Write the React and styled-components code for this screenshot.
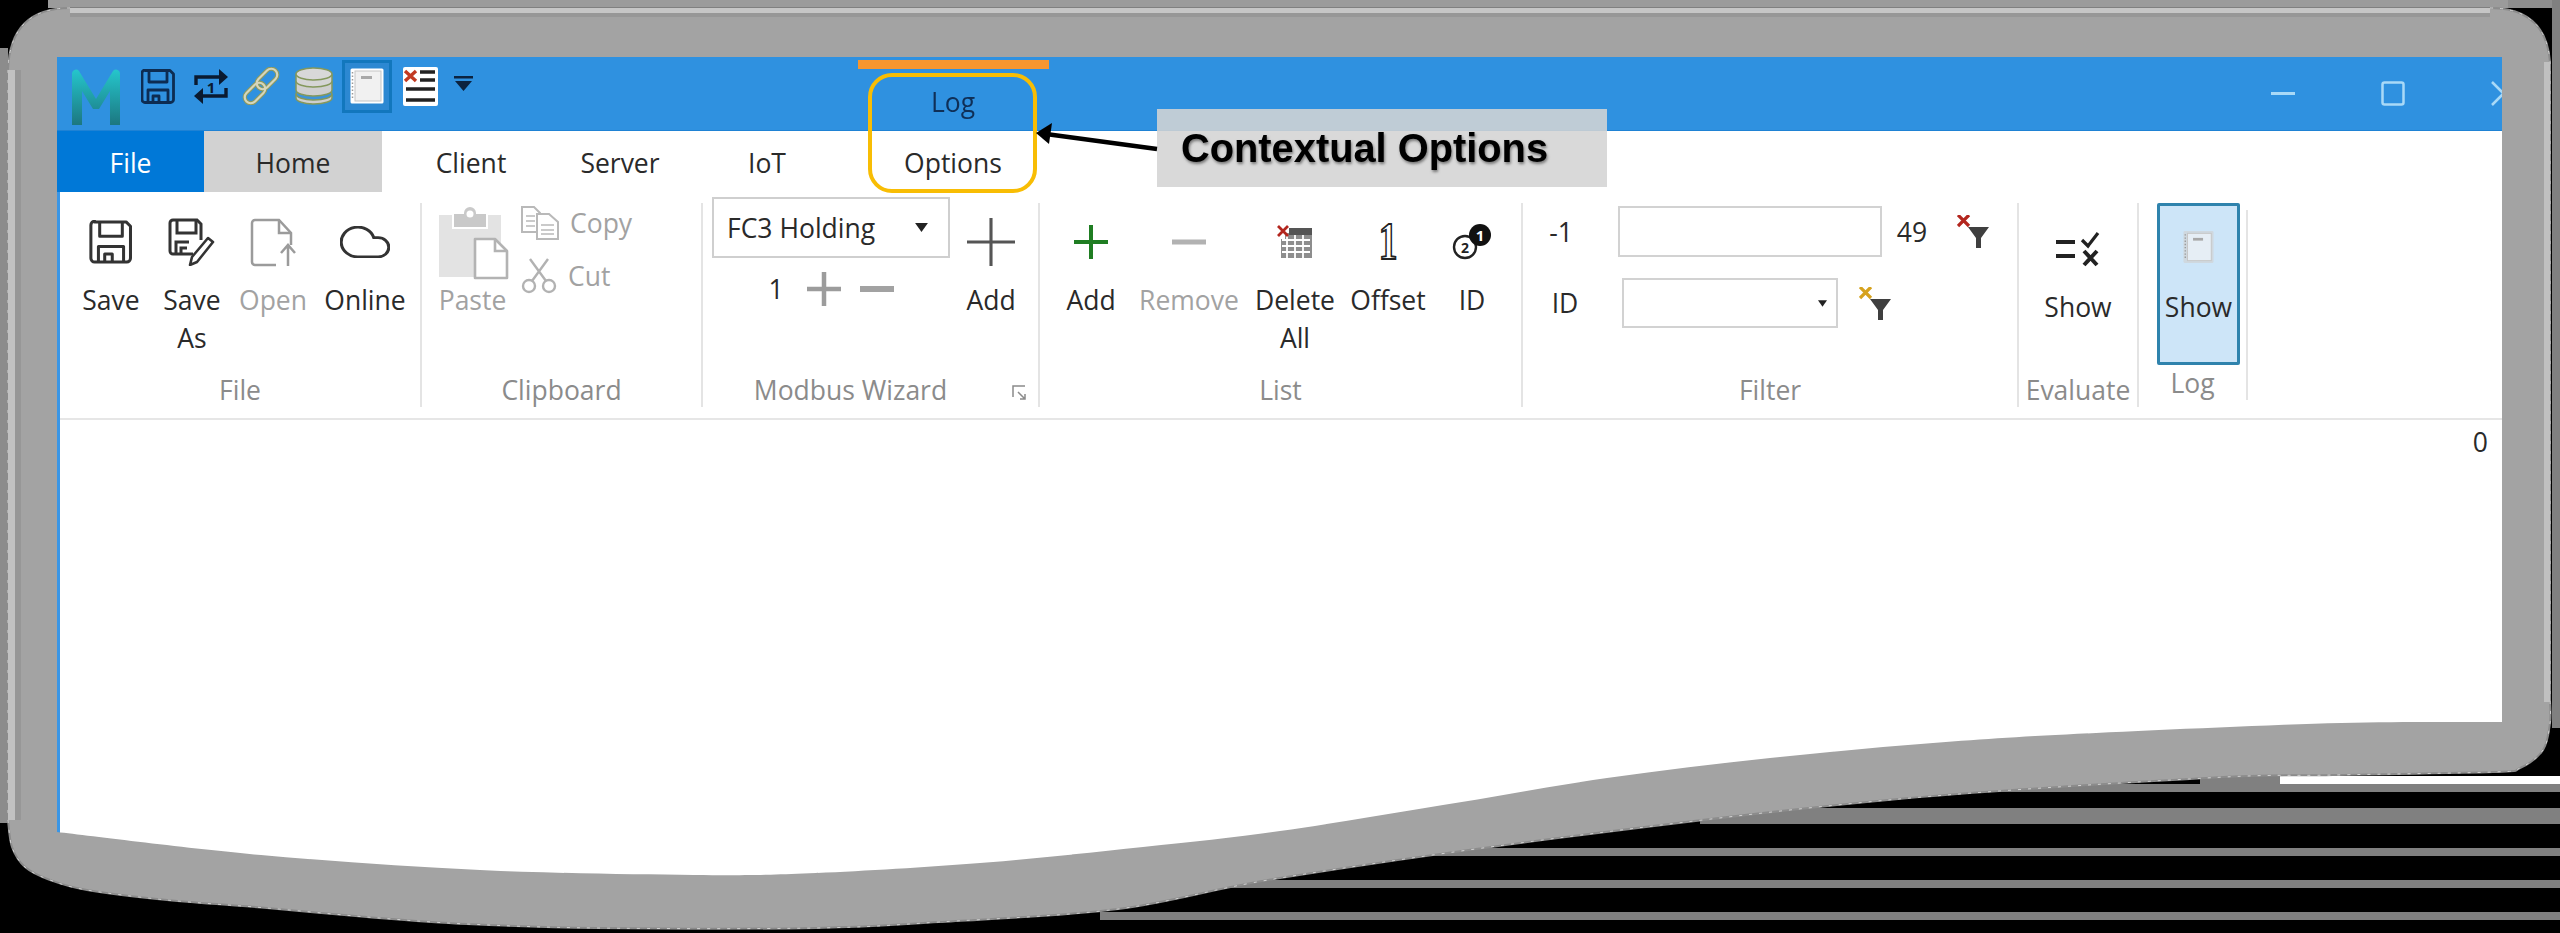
import React from "react";
import styled, { createGlobalStyle } from "styled-components";

const smooth = (pts) => {
  let d = "";
  for (let i = 0; i < pts.length - 1; i++) {
    const p0 = pts[i - 1] || pts[i];
    const p1 = pts[i];
    const p2 = pts[i + 1];
    const p3 = pts[i + 2] || p2;
    const c1 = [p1[0] + (p2[0] - p0[0]) / 6, p1[1] + (p2[1] - p0[1]) / 6];
    const c2 = [p2[0] - (p3[0] - p1[0]) / 6, p2[1] - (p3[1] - p1[1]) / 6];
    d += `C${c1[0].toFixed(1)} ${c1[1].toFixed(1)} ${c2[0].toFixed(1)} ${c2[1].toFixed(1)} ${p2[0]} ${p2[1]}`;
  }
  return d;
};

const WIN_X = 57;
const WIN_Y = 57;
const wavePts = [
  [2502, 722], [2341, 723], [2096, 733], [1933, 743], [1770, 758], [1607, 778], [1443, 805],
  [1280, 831], [1143, 847], [980, 863], [816, 873], [694, 875], [480, 870], [261, 855], [57, 832],
].map(([x, y]) => [x - WIN_X, y - WIN_Y]);
const WAVE_CLIP = `M0 0H2445V${wavePts[0][1]}${smooth(wavePts)}Z`;

const shapePts = [
  [2550, 700], [2550, 723], [2543, 750], [2520, 768], [2493, 772], [2333, 775], [2206, 778], [1888, 800],
  [1558, 838], [1280, 878], [1118, 909], [939, 922], [816, 928], [596, 928], [467, 924], [367, 917],
  [267, 908], [167, 900], [87, 890], [50, 880], [25, 867], [12, 847], [8, 820],
];
const SHAPE = `M70 8H2490Q2546 8 2550 62V700${smooth(shapePts)}V70Q10 8 70 8Z`;

const GlobalStyle = createGlobalStyle`
  html, body { margin: 0; padding: 0; background: #000; overflow: hidden; }
  * { box-sizing: border-box; }
`;

const Page = styled.div`
  position: relative;
  width: 2560px;
  height: 933px;
  padding: ${WIN_Y}px 0 0 ${WIN_X}px;
  font-family: "Open Sans", "Noto Sans", sans-serif;
  font-size: 26.5px;
  line-height: 38px;
  color: #2a2a2a;
  overflow: hidden;
`;
const Backdrop = styled.svg`
  position: absolute;
  inset: 0;
`;
const AppWindow = styled.div`
  position: relative;
  width: 2445px;
  height: 819px;
  display: flex;
  flex-direction: column;
  background: #fff;
  clip-path: path("${WAVE_CLIP}");
  filter: blur(0.6px);
`;
const TitleBar = styled.div`
  display: grid;
  grid-template-columns: 797px 198px 1fr;
  height: 74px;
  flex: none;
  background: #2f91e0;
  border-bottom: 1px solid #1f82d4;
`;
const QuickBar = styled.div`
  display: flex;
  align-items: center;
  height: 40px;
  margin-top: 9px;
  padding-left: 15px;
`;
const Slot = styled.div`
  display: flex;
  flex: none;
  margin-left: ${(p) => p.$gap || 0}px;
  margin-top: ${(p) => p.$top || 0}px;
`;
const ActiveSlot = styled(Slot)`
  align-items: center;
  justify-content: center;
  width: 50px;
  height: 53px;
  border: 3px solid #1277bd;
  background: #2c88d2;
`;
const ContextTitle = styled.div`
  margin-top: 26px;
  text-align: center;
  color: #0f2f57;
`;
const WindowControls = styled.div`
  display: flex;
  align-items: center;
  justify-content: flex-end;
  gap: 86px;
  margin-right: -14px;
  overflow: visible;
`;
const TabRow = styled.div`
  display: flex;
  height: 61px;
  flex: none;
  background: #fff;
`;
const Tab = styled.div`
  width: ${(p) => p.$w}px;
  padding-top: 13px;
  text-align: center;
  line-height: 38px;
  color: ${(p) => (p.$file ? "#fff" : "#2a2a2a")};
  background: ${(p) => (p.$file ? "#0078d7" : p.$active ? "#d2d2d2" : "#fff")};
`;
const Body = styled.div`
  flex: 1;
  display: flex;
  flex-direction: column;
  border-left: 3px solid #3a96e6;
`;
const Ribbon = styled.div`
  display: flex;
  height: 228px;
  flex: none;
  padding-top: 11px;
  border-bottom: 2px solid #e6e6e6;
`;
const Group = styled.div`
  position: relative;
  display: flex;
  flex-direction: column;
  width: ${(p) => p.$w}px;
  height: ${(p) => p.$h || 204}px;
  margin-top: ${(p) => p.$top || 0}px;
  border-right: 2px solid #e4e4e4;
`;
const GroupBody = styled.div`
  flex: 1;
  display: flex;
  min-height: 0;
  padding-left: ${(p) => p.$pad || 0}px;
`;
const GroupLabel = styled.div`
  flex: none;
  height: 36px;
  padding-right: ${(p) => p.$right || 0}px;
  text-align: center;
  line-height: 38px;
  color: #8b8b8b;
`;
const Launcher = styled.svg`
  position: absolute;
  right: 12px;
  bottom: 6px;
`;
const RibbonButton = styled.div`
  flex: none;
  display: flex;
  flex-direction: column;
  align-items: center;
  width: ${(p) => p.$w}px;
  text-align: center;
  white-space: nowrap;
  color: ${(p) => (p.$off ? "#a2a2a2" : "#2a2a2a")};
`;
const IconArea = styled.div`
  display: flex;
  align-items: center;
  justify-content: center;
  height: ${(p) => p.$h || 78}px;
  padding-top: ${(p) => p.$pt || 0}px;
`;
const SmallColumn = styled.div`
  display: flex;
  flex-direction: column;
  gap: 15px;
  margin-left: -2px;
  padding-top: 1px;
`;
const SmallRow = styled.div`
  display: flex;
  align-items: center;
  gap: 11px;
  height: 38px;
  color: #a2a2a2;
`;
const WizardColumn = styled.div`
  display: flex;
  flex-direction: column;
  width: 238px;
`;
const Combo = styled.div`
  display: flex;
  align-items: center;
  justify-content: space-between;
  width: 238px;
  height: 61px;
  margin-top: -6px;
  padding: 0 20px 0 13px;
  border: 2px solid #cfcfcf;
  background: #fff;
`;
const Stepper = styled.div`
  display: flex;
  align-items: center;
  height: 40px;
  margin-top: 11px;
  padding-left: 56px;
`;
const StepValue = styled.span`
  width: 16px;
  text-align: center;
`;
const StepGlyph = styled.svg`
  margin-left: ${(p) => p.$gap}px;
`;
const AddColumn = styled(RibbonButton)`
  margin-left: 6px;
`;
const FilterBody = styled.div`
  display: flex;
  flex-direction: column;
  gap: 21px;
  padding-top: 3px;
`;
const FilterRow = styled.div`
  display: flex;
  align-items: center;
  height: ${(p) => p.$h}px;
`;
const FilterText = styled.span`
  flex: none;
  width: ${(p) => p.$w}px;
  margin-right: ${(p) => p.$mr || 0}px;
  text-align: center;
`;
const Field = styled.div`
  flex: none;
  display: flex;
  align-items: center;
  justify-content: flex-end;
  width: ${(p) => p.$w}px;
  height: 100%;
  padding-right: 9px;
  border: 2px solid #d2d2d2;
  background: #fff;
`;
const FunnelSlot = styled.div`
  display: flex;
  margin-left: ${(p) => p.$gap}px;
`;
const PressedButton = styled(RibbonButton)`
  height: 162px;
  margin: -7px 0 0 18px;
  border: 3px solid #2f83ad;
  border-radius: 2px;
  background: #cde5f8;
`;
const Content = styled.div`
  flex: 1;
  padding: 3px 14px 0 0;
  text-align: right;
`;
const OrangeBar = styled.div`
  position: absolute;
  left: 858px;
  top: 60px;
  width: 191px;
  height: 9px;
  background: #f7962f;
`;
const YellowFrame = styled.div`
  position: absolute;
  left: 868px;
  top: 73px;
  width: 169px;
  height: 120px;
  border: 4px solid #f8bd04;
  border-radius: 24px;
`;
const CalloutBox = styled.div`
  position: absolute;
  left: 1157px;
  top: 109px;
  width: 450px;
  height: 78px;
  display: flex;
  align-items: center;
  padding-left: 24px;
  background: rgba(212, 212, 212, 0.88);
  font-family: "Liberation Sans", Arial, sans-serif;
  font-weight: 700;
  font-size: 39.8px;
  color: #000;
  text-shadow: 1px 2px 3px #777;
  white-space: nowrap;
`;
const CalloutArrow = styled.svg`
  position: absolute;
  left: 1030px;
  top: 118px;
`;

const FloppyPaths = ({ color, sw }) => (
  <g fill="none" stroke={color} strokeWidth={sw} strokeLinejoin="round">
    <path d="M4 1.500h25l3.500 3.500v25.500a3 3 0 0 1-3 3h-25.500a3 3 0 0 1-3-3v-26.500a3 3 0 0 1 3-3z" />
    <path d="M8 2v11h18V2" />
    <path d="M7 33V21h20v12" />
    <path d="M12 33v-6h6v6" />
  </g>
);
const Floppy = ({ w, h, color = "#333", sw = 2.4 }) => (
  <svg width={w} height={h} viewBox="0 0 34 35"><FloppyPaths color={color} sw={sw} /></svg>
);
const SaveAsIcon = () => (
  <svg width="48" height="48" viewBox="0 0 48 48" fill="none">
    <path d="M25 36H5a3 3 0 0 1-3-3V5a3 3 0 0 1 3-3h24l4 4v16" stroke="#333" strokeWidth="3" />
    <path d="M9 3v12h19V3M8 36V24h13M13 36v-6h6" stroke="#333" strokeWidth="3" />
    <path d="M40 20l5 4-16 20-7 3 2-8z" stroke="#333" strokeWidth="2.600" strokeLinejoin="round" />
  </svg>
);
const OpenIcon = () => (
  <svg width="46" height="49" viewBox="0 0 46 49" fill="none" stroke="#9b9b9b" strokeWidth="2.500">
    <path d="M26 47H5a3 3 0 0 1-3-3V5a3 3 0 0 1 3-3h24l12 13v12" />
    <path d="M29 2v13h12" />
    <path d="M38 48V28M31 35l7-8 7 8" />
  </svg>
);
const CloudIcon = () => (
  <svg width="50" height="32" viewBox="1.500 4.500 21 15" preserveAspectRatio="none" fill="none" stroke="#333" strokeWidth="1.300">
    <path d="M17.500 19H9a7 7 0 1 1 6.710-9h1.790a4.500 4.500 0 1 1 0 9Z" />
  </svg>
);
const PasteIcon = () => (
  <svg width="72" height="75" viewBox="0 0 72 75">
    <path d="M2 10h62v62H2z" fill="#e3e3e3" />
    <path d="M16 8h10a7 7 0 0 1 14 0h10v15H16z" fill="#c9c9c9" stroke="#fff" strokeWidth="2" />
    <circle cx="33" cy="9" r="3.500" fill="#fff" />
    <path d="M38 34h20l12 12v27H38z" fill="#fff" stroke="#b3b3b3" strokeWidth="2.600" strokeLinejoin="round" />
    <path d="M58 34v12h12" fill="none" stroke="#b3b3b3" strokeWidth="2.600" />
  </svg>
);
const CopyIcon = () => (
  <svg width="38" height="34" viewBox="0 0 38 34" fill="#fff" stroke="#b9b9b9" strokeWidth="2">
    <path d="M1 1h12l6 6v19H1z" />
    <path d="M16 8h12l9 8v17H16z" />
    <path d="M5 10h9M5 15h9M5 20h9M20 19h13M20 24h13M20 28h13" strokeWidth="1.500" />
  </svg>
);
const CutIcon = () => (
  <svg width="36" height="36" viewBox="0 0 36 36" fill="none" stroke="#b2b2b2" strokeWidth="2.400">
    <circle cx="8" cy="28" r="6" />
    <circle cx="28" cy="28" r="6" />
    <path d="M11 23L27 1M25 23L9 1" />
  </svg>
);
const PlusGlyph = ({ size, color, sw, gap }) => (
  <StepGlyph $gap={gap || 0} width={size} height={size} viewBox="0 0 34 34" stroke={color} strokeWidth={sw} fill="none">
    <path d="M0 17H34M17 0V34" />
  </StepGlyph>
);
const MinusGlyph = ({ color, sw, gap }) => (
  <StepGlyph $gap={gap || 0} width="34" height="34" viewBox="0 0 34 34" stroke={color} strokeWidth={sw} fill="none">
    <path d="M0 17H34" />
  </StepGlyph>
);
const DeleteAllIcon = () => (
  <svg width="36" height="34" viewBox="0 0 36 34">
    <path d="M8 8h27v25H4V14h4z" fill="#8d8d8d" />
    <path d="M12 3h23v7H12z" fill="#555" />
    <path d="M5 15h28M5 21h28M5 27h28M10 10v23M18 10v23M26 10v23" stroke="#fff" strokeWidth="1.800" />
    <path d="M1 1l10 10M11 1L1 11" stroke="#b3261e" strokeWidth="2.800" />
  </svg>
);
const OffsetGlyph = styled.span`
  display: block;
  font-family: "Liberation Serif", serif;
  font-weight: 700;
  font-size: 52px;
  line-height: 40px;
  color: #fff;
  -webkit-text-stroke: 2px #222;
  transform: scaleX(0.72);
`;
const IdIcon = () => (
  <svg width="40" height="36" viewBox="0 0 40 36">
    <circle cx="13" cy="23" r="11" fill="#fff" stroke="#222" strokeWidth="2.400" />
    <text x="13" y="28.500" textAnchor="middle" fontFamily="Open Sans" fontWeight="700" fontSize="14" fill="#222">2</text>
    <circle cx="28" cy="11" r="11" fill="#111" />
    <text x="28" y="17" textAnchor="middle" fontFamily="Open Sans" fontWeight="700" fontSize="15" fill="#fff">1</text>
  </svg>
);
const FunnelIcon = ({ color }) => (
  <svg width="33" height="33" viewBox="0 0 33 33">
    <path d="M1 0l11 11M12 0L1 11" stroke={color} strokeWidth="3.200" fill="none" />
    <path d="M11 12h21L24 23v10h-5V23z" fill="#3f3f3f" />
  </svg>
);
const EvaluateIcon = () => (
  <svg width="44" height="35" viewBox="0 0 44 35" fill="none" stroke="#222" strokeWidth="4">
    <path d="M0 10h19M0 24h19" />
    <path d="M26 8l6 6 10-13" strokeWidth="3.200" />
    <path d="M28 19l13 14M41 19L28 33" />
  </svg>
);
const NotebookIcon = ({ w, h, page = "#f1f1f1", edge = "#fff", bar = "#a8a8a8" }) => (
  <svg width={w} height={h} viewBox="0 0 34 36">
    <rect x="0.500" y="0.500" width="33" height="35" rx="1.500" fill={edge} />
    <rect x="5" y="3" width="26" height="30" fill={page} stroke="#c5c5c5" strokeWidth="1" />
    <path d="M2.500 4v28" stroke="#9a9a9a" strokeWidth="1.500" strokeDasharray="1.500 2" />
    <rect x="11" y="8" width="11" height="3" fill={bar} />
  </svg>
);
const RepeatIcon = () => (
  <svg width="36" height="37" viewBox="0 0 36 37" fill="none" stroke="#0a1a30" strokeWidth="3.400">
    <path d="M3 17V9h25" />
    <path d="M26 1l9 8-9 8z" fill="#0a1a30" stroke="none" />
    <path d="M33 20v8H8" />
    <path d="M10 20l-9 8 9 8z" fill="#0a1a30" stroke="none" />
    <text x="18" y="25" textAnchor="middle" fontFamily="Open Sans" fontWeight="700" fontSize="15" fill="#0a1a30" stroke="none">1</text>
  </svg>
);
const ChainLinks = () => (
  <>
    <rect x="1" y="20" width="24" height="12" rx="6" transform="rotate(-45 13 26)" />
    <rect x="13" y="6" width="24" height="12" rx="6" transform="rotate(-45 25 12)" />
  </>
);
const LinkIcon = () => (
  <svg width="38" height="38" viewBox="0 0 38 38" fill="none">
    <g stroke="#8b9a62" strokeWidth="4.400"><ChainLinks /></g>
    <g stroke="#d6d6bc" strokeWidth="2.200"><ChainLinks /></g>
  </svg>
);
const DatabaseIcon = () => (
  <svg width="38" height="38" viewBox="0 0 38 38" stroke="#84985c" strokeWidth="1.500">
    <path d="M1 28v3c0 3.500 8 6 18 6s18-2.500 18-6v-3z" fill="#cfcfcf" />
    <ellipse cx="19" cy="27" rx="18" ry="6" fill="#3d93d8" />
    <path d="M1 15v8c0 3.500 8 6 18 6s18-2.500 18-6v-8z" fill="#cfcfcf" />
    <path d="M1 8v6c0 3.500 8 6 18 6s18-2.500 18-6V8z" fill="#d5d5d5" />
    <ellipse cx="19" cy="7" rx="18" ry="6" fill="#d8d8d8" />
  </svg>
);
const ListXIcon = () => (
  <svg width="35" height="39" viewBox="0 0 35 39">
    <rect width="35" height="39" rx="2" fill="#fff" />
    <path d="M2 4l11 10M13 4L2 14" stroke="#c23a22" strokeWidth="3.400" />
    <path d="M17 5h15M17 13h15M3 22h29M3 33h29" stroke="#222" strokeWidth="3.600" />
  </svg>
);
const DropGlyph = () => (
  <svg width="19" height="15" viewBox="0 0 19 15">
    <path d="M0 0h19v2.500H0zM1 5h17l-8.500 10z" fill="#0c2340" />
  </svg>
);
const LogoM = () => (
  <svg width="48" height="56" viewBox="0 0 48 56" fill="none">
    <defs>
      <linearGradient id="logoGrad" x1="0" y1="0" x2="0" y2="1">
        <stop offset="0" stopColor="#25c6cc" />
        <stop offset="1" stopColor="#1c7780" />
      </linearGradient>
    </defs>
    <path d="M0 56V4a4 4 0 0 1 7-2l17 28L41 2a4 4 0 0 1 7 2v52H38V22L27 40h-6L10 22v34z" fill="url(#logoGrad)" />
  </svg>
);
const Triangle = ({ w, h, color = "#222" }) => (
  <svg width={w} height={h} viewBox="0 0 10 7"><path d="M0 0h10L5 7z" fill={color} /></svg>
);

export default function App() {
  return (
    <Page>
      <GlobalStyle />
      <Backdrop width="2560" height="933" viewBox="0 0 2560 933">
        <rect width="2560" height="933" fill="#000" />
        <rect x="48" y="0" width="2460" height="8" fill="#9b9b9b" />
        <rect x="0" y="48" width="8" height="775" fill="#8c8c8c" />
        <rect x="2552" y="0" width="8" height="728" fill="#808080" />
        <rect x="2508" y="0" width="44" height="8" fill="#8e8e8e" />
        <rect x="2280" y="776" width="280" height="8" fill="#fff" />
        <rect x="2200" y="776" width="80" height="8" fill="#808080" />
        <rect x="1900" y="784" width="660" height="8" fill="#808080" />
        <rect x="1700" y="808" width="860" height="16" fill="#808080" />
        <rect x="1400" y="848" width="1160" height="8" fill="#808080" />
        <rect x="1200" y="880" width="1360" height="8" fill="#808080" />
        <rect x="1100" y="912" width="1460" height="8" fill="#808080" />
        <path d={SHAPE} fill="#a3a3a3" stroke="#8c8c8c" strokeWidth="2" />
        <path d={SHAPE} fill="none" stroke="#d4d4d4" strokeWidth="1" strokeDasharray="3 7" />
        <rect x="70" y="7" width="2420" height="1" fill="#808080" />
        <rect x="70" y="8" width="2420" height="5" fill="#c6c6c6" />
        <rect x="70" y="13" width="2420" height="4" fill="#979797" />
        <rect x="8" y="70" width="7" height="750" fill="#c2c2c2" />
        <rect x="15" y="70" width="6" height="750" fill="#979797" />
        <rect x="2544" y="62" width="6" height="640" fill="#c0c0c0" />
      </Backdrop>

      <AppWindow>
        <TitleBar>
          <QuickBar>
            <Slot $top={22}><LogoM /></Slot>
            <Slot $gap={21}><Floppy w={34} h={35} color="#0d2c52" sw={2.800} /></Slot>
            <Slot $gap={18}><RepeatIcon /></Slot>
            <Slot $gap={13}><LinkIcon /></Slot>
            <Slot $gap={15}><DatabaseIcon /></Slot>
            <ActiveSlot $gap={9}><NotebookIcon w={34} h={36} /></ActiveSlot>
            <Slot $gap={11}><ListXIcon /></Slot>
            <Slot $gap={16} $top={-6}><DropGlyph /></Slot>
          </QuickBar>
          <ContextTitle>Log</ContextTitle>
          <WindowControls>
            <svg width="24" height="4"><rect width="24" height="3" fill="#a9d9f7" /></svg>
            <svg width="24" height="25" fill="none" stroke="#a9d9f7" strokeWidth="2.500">
              <rect x="1.500" y="1.500" width="21" height="22" rx="2" />
            </svg>
            <svg width="25" height="25" fill="none" stroke="#a9d9f7" strokeWidth="2.500">
              <path d="M1 1l23 23M24 1L1 24" />
            </svg>
          </WindowControls>
        </TitleBar>

        <TabRow>
          <Tab $w={147} $file>File</Tab>
          <Tab $w={178} $active>Home</Tab>
          <Tab $w={178}>Client</Tab>
          <Tab $w={120}>Server</Tab>
          <Tab $w={174}>IoT</Tab>
          <Tab $w={198}>Options</Tab>
        </TabRow>

        <Body>
          <Ribbon>
            <Group $w={362}>
              <GroupBody $pad={10}>
                <RibbonButton $w={82}>
                  <IconArea><Floppy w={44} h={44} /></IconArea>Save
                </RibbonButton>
                <RibbonButton $w={80}>
                  <IconArea><SaveAsIcon /></IconArea>Save<br />As
                </RibbonButton>
                <RibbonButton $w={82} $off>
                  <IconArea><OpenIcon /></IconArea>Open
                </RibbonButton>
                <RibbonButton $w={102}>
                  <IconArea><CloudIcon /></IconArea>Online
                </RibbonButton>
              </GroupBody>
              <GroupLabel>File</GroupLabel>
            </Group>

            <Group $w={281}>
              <GroupBody>
                <RibbonButton $w={101} $off>
                  <IconArea><PasteIcon /></IconArea>Paste
                </RibbonButton>
                <SmallColumn>
                  <SmallRow><CopyIcon />Copy</SmallRow>
                  <SmallRow><CutIcon />Cut</SmallRow>
                </SmallColumn>
              </GroupBody>
              <GroupLabel>Clipboard</GroupLabel>
            </Group>

            <Group $w={337}>
              <GroupBody $pad={9}>
                <WizardColumn>
                  <Combo>FC3 Holding<Triangle w={13} h={9} /></Combo>
                  <Stepper>
                    <StepValue>1</StepValue>
                    <PlusGlyph size={34} color="#9c9c9c" sw={4.500} gap={23} />
                    <MinusGlyph color="#a2a2a2" sw={6} gap={19} />
                  </Stepper>
                </WizardColumn>
                <AddColumn $w={70}>
                  <IconArea><PlusGlyph size={48} color="#555" sw={2.200} /></IconArea>Add
                </AddColumn>
              </GroupBody>
              <GroupLabel $right={40}>Modbus Wizard</GroupLabel>
              <Launcher width="14" height="16" viewBox="0 0 14 16" fill="none" stroke="#8b8b8b" strokeWidth="1.500">
                <path d="M1 12V1h12" />
                <path d="M6 7l7 7M13 9v5H8" />
              </Launcher>
            </Group>

            <Group $w={483}>
              <GroupBody $pad={4}>
                <RibbonButton $w={94}>
                  <IconArea><PlusGlyph size={34} color="#1f7d22" sw={4} /></IconArea>Add
                </RibbonButton>
                <RibbonButton $w={102} $off>
                  <IconArea><MinusGlyph color="#b2b2b2" sw={5} /></IconArea>Remove
                </RibbonButton>
                <RibbonButton $w={110}>
                  <IconArea><DeleteAllIcon /></IconArea>Delete<br />All
                </RibbonButton>
                <RibbonButton $w={76}>
                  <IconArea><OffsetGlyph>1</OffsetGlyph></IconArea>Offset
                </RibbonButton>
                <RibbonButton $w={92}>
                  <IconArea><IdIcon /></IconArea>ID
                </RibbonButton>
              </GroupBody>
              <GroupLabel>List</GroupLabel>
            </Group>

            <Group $w={496}>
              <GroupBody>
                <FilterBody>
                  <FilterRow $h={51}>
                    <FilterText $w={76} $mr={19}>-1</FilterText>
                    <Field $w={264} />
                    <FilterText $w={60}>49</FilterText>
                    <FunnelSlot $gap={15}><FunnelIcon color="#b3261e" /></FunnelSlot>
                  </FilterRow>
                  <FilterRow $h={50}>
                    <FilterText $w={84} $mr={15}>ID</FilterText>
                    <Field $w={216}><Triangle w={9} h={7} /></Field>
                    <FunnelSlot $gap={21}><FunnelIcon color="#d6a21e" /></FunnelSlot>
                  </FilterRow>
                </FilterBody>
              </GroupBody>
              <GroupLabel>Filter</GroupLabel>
            </Group>

            <Group $w={120}>
              <GroupBody>
                <RibbonButton $w={118}>
                  <IconArea $h={85} $pt={7}><EvaluateIcon /></IconArea>Show
                </RibbonButton>
              </GroupBody>
              <GroupLabel>Evaluate</GroupLabel>
            </Group>

            <Group $w={109} $h={190} $top={7}>
              <GroupBody>
                <PressedButton $w={83}>
                  <IconArea $h={82}><NotebookIcon w={31} h={34} page="#e6eef5" edge="#cfd8df" /></IconArea>Show
                </PressedButton>
              </GroupBody>
              <GroupLabel>Log</GroupLabel>
            </Group>
          </Ribbon>
          <Content>0</Content>
        </Body>
      </AppWindow>

      <OrangeBar />
      <YellowFrame />
      <CalloutBox>Contextual Options</CalloutBox>
      <CalloutArrow width="130" height="36" viewBox="0 0 130 36">
        <path d="M127 31L16 16" stroke="#000" strokeWidth="4.500" />
        <path d="M6 15L22 5l-3 21z" fill="#000" />
      </CalloutArrow>
    </Page>
  );
}
